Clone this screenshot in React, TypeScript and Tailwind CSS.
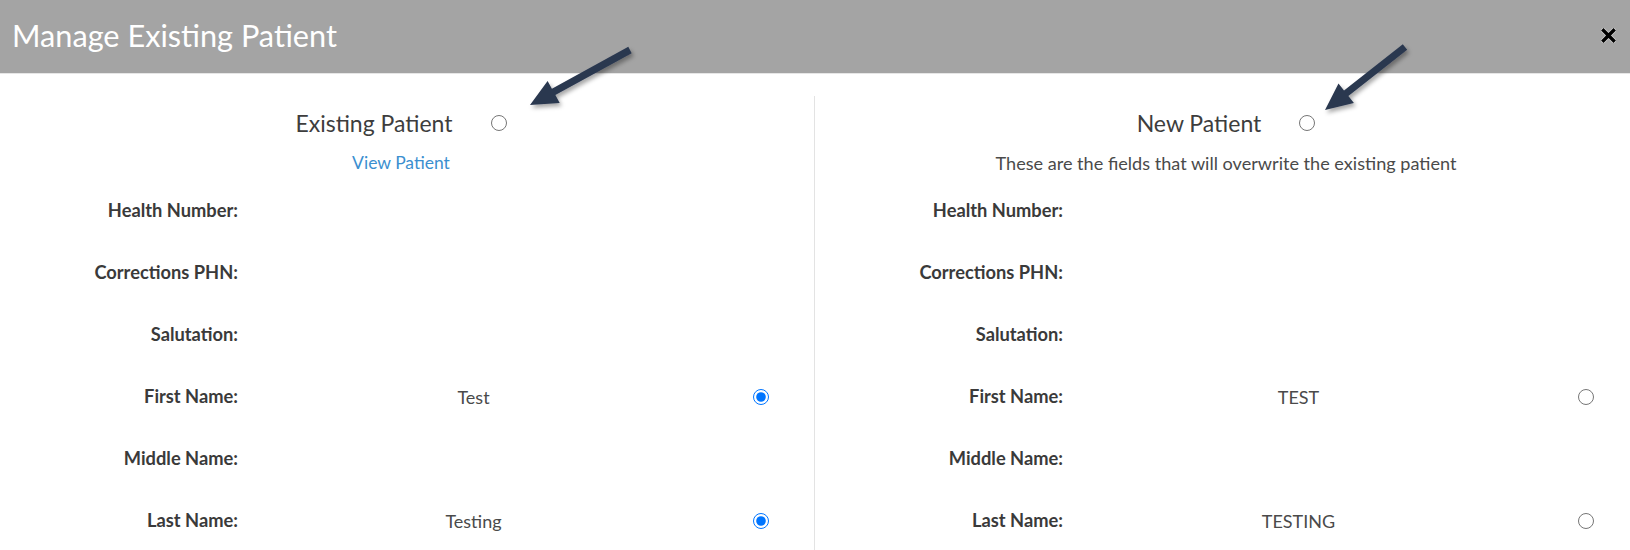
import React from "react";

type Field = { label: string; value?: string };

const existing: Field[] = [
  { label: "Health Number:" },
  { label: "Corrections PHN:" },
  { label: "Salutation:" },
  { label: "First Name:", value: "Test" },
  { label: "Middle Name:" },
  { label: "Last Name:", value: "Testing" },
];

const incoming: Field[] = [
  { label: "Health Number:" },
  { label: "Corrections PHN:" },
  { label: "Salutation:" },
  { label: "First Name:", value: "TEST" },
  { label: "Middle Name:" },
  { label: "Last Name:", value: "TESTING" },
];

// arrow polygon from tail to tip
const arrowPoints = (tx: number, ty: number, hx: number, hy: number) => {
  const dx = hx - tx;
  const dy = hy - ty;
  const len = Math.hypot(dx, dy);
  const ux = dx / len;
  const uy = dy / len;
  const nx = -uy;
  const ny = ux;
  const sw = 3.6;
  const hw = 12.5;
  const hl = 27;
  const bx = hx - ux * hl;
  const by = hy - uy * hl;
  const pts = [
    [tx + nx * sw, ty + ny * sw],
    [bx + nx * sw, by + ny * sw],
    [bx + nx * hw, by + ny * hw],
    [hx, hy],
    [bx - nx * hw, by - ny * hw],
    [bx - nx * sw, by - ny * sw],
    [tx - nx * sw, ty - ny * sw],
  ];
  return pts.map((p) => p.map((v) => v.toFixed(1)).join(",")).join(" ");
};

const Radio = ({ checked }: { checked?: boolean }) => (
  <input
    type="radio"
    checked={!!checked}
    readOnly
    className="w-[16px] h-[16px] m-0 shrink-0 accent-[#0075ff]"
  />
);

const Rows = ({ fields, checked, shift }: { fields: Field[]; checked: boolean; shift?: boolean }) => (
  <div className={shift ? "flex flex-col mt-[5px] ml-[3px]" : "flex flex-col mt-[5px]"}>
    {fields.map((f) => (
      <div key={f.label} className="h-[62px] flex items-center">
        <div className="w-[238px] shrink-0 text-right font-bold text-[18.3px] text-[#3a3a3a]">
          {f.label}
        </div>
        <div className="w-[471px] shrink-0 text-center text-[18px] text-[#4a4a4a]">
          {f.value ?? ""}
        </div>
        <div className="w-[60px] shrink-0 flex pl-[44px]">
          {f.value ? <Radio checked={checked} /> : null}
        </div>
      </div>
    ))}
  </div>
);

export default function App() {
  return (
    <div
      className="relative w-[1630px] h-[550px] bg-white overflow-hidden"
      style={{ fontFamily: "Lato, 'Noto Sans', sans-serif" }}
    >
      <div className="h-[74px] bg-[#a4a4a4] border-b border-[#e6e6e6] flex items-center justify-between pl-[12px] pr-[14px]">
        <h1 className="text-white text-[30.7px] leading-none">Manage Existing Patient</h1>
        <svg width="15" height="15" viewBox="0 0 15 15" className="mb-[2px]">
          <path d="M2.5 2.5 L12.5 12.5 M12.5 2.5 L2.5 12.5" stroke="#fff" strokeWidth="5" strokeLinecap="square" opacity="0.5" />
          <path d="M2.5 2.5 L12.5 12.5 M12.5 2.5 L2.5 12.5" stroke="#000" strokeWidth="3.4" strokeLinecap="square" />
        </svg>
      </div>

      <div className="flex pt-[22px] h-[476px]">
        <div className="w-[802px] shrink-0">
          <div className="h-[34px] mt-[10px] flex items-center justify-center gap-[38px]">
            <span className="text-[23px] text-[#3d3d3d]">Existing Patient</span>
            <Radio />
          </div>
          <div className="mt-[11px] h-[24px] leading-[24px] text-center text-[17.5px] text-[#3b8fd0]">
            View Patient
          </div>
          <Rows fields={existing} checked />
        </div>

        <div className="ml-[12px] w-px shrink-0 bg-[#e3e3e3]" />

        <div className="flex-1 min-w-0 pl-[7px]">
          <div className="h-[34px] mt-[10px] flex items-center justify-center gap-[38px]">
            <span className="text-[23px] text-[#3d3d3d]">New Patient</span>
            <Radio />
          </div>
          <div className="mt-[11px] h-[24px] leading-[24px] text-center text-[18.1px] text-[#4a4a4a] whitespace-nowrap">
            These are the fields that will overwrite the existing patient
          </div>
          <Rows fields={incoming} checked={false} shift />
        </div>
      </div>

      <svg
        width="1630"
        height="550"
        className="absolute inset-0 pointer-events-none"
      >
        <defs>
          <filter id="sh" x="-20%" y="-20%" width="140%" height="140%">
            <feDropShadow dx="2" dy="3" stdDeviation="2" floodColor="#000" floodOpacity="0.35" />
          </filter>
        </defs>
        <polygon points={arrowPoints(630, 50, 530, 105)} fill="#2b3850" filter="url(#sh)" />
        <polygon points={arrowPoints(1405, 47, 1325, 110)} fill="#2b3850" filter="url(#sh)" />
      </svg>
    </div>
  );
}
